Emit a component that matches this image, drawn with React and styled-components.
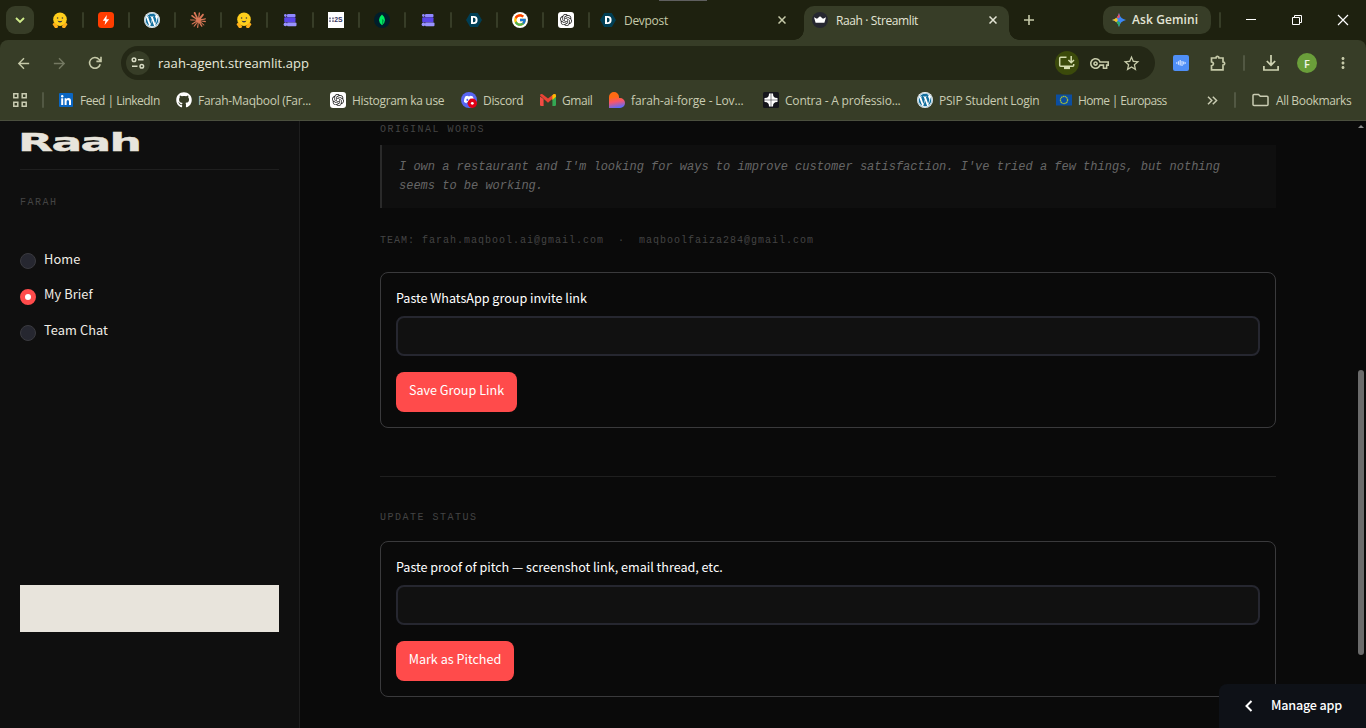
import React from "react";
import styled, { createGlobalStyle, css } from "styled-components";
import { FaWordpress, FaGithub } from "react-icons/fa";
import { FcGoogle } from "react-icons/fc";
import { SiOpenai, SiClaude, SiDiscord } from "react-icons/si";
import {
  MdArrowBack,
  MdArrowForward,
  MdStarBorder,
  MdMoreVert,
  MdOutlineVpnKey,
} from "react-icons/md";

const GlobalStyle = createGlobalStyle`
  * {
    box-sizing: border-box;
  }

  body {
    margin: 0;
    overflow: hidden;
    background: #0a0a0a;
  }
`;

const uiFont = `"Open Sans", "Noto Sans", sans-serif`;
const sansFont = `"Noto Sans CJK SC", "Noto Sans", sans-serif`;
const monoFont = `"Liberation Mono", monospace`;

const Window = styled.div`
  width: 1366px;
  height: 728px;
  display: flex;
  flex-direction: column;
  position: relative;
  overflow: hidden;
  font-family: ${uiFont};
`;

/* ---------- tab strip ---------- */

const TabStrip = styled.div`
  height: 40px;
  display: flex;
  align-items: center;
  padding-left: 6px;
  background: #1e210f;
`;

const DragHandle = styled.div`
  position: absolute;
  top: 0;
  left: 659px;
  width: 48px;
  height: 1px;
  background: #5f5f5f;
`;

const TabSearch = styled.div`
  width: 28px;
  height: 28px;
  margin-right: 10px;
  border-radius: 9px;
  background: #373d27;
  display: flex;
  align-items: center;
  justify-content: center;
`;

const PinnedTab = styled.div`
  width: 46px;
  height: 28px;
  padding-left: 8px;
  padding-right: 6px;
  display: flex;
  align-items: center;
  justify-content: space-between;
`;

const Divider = styled.div`
  width: 2px;
  height: 16px;
  flex: none;
  border-radius: 1px;
  background: ${(props) => props.$color || "#373d27"};
  margin-left: ${(props) => props.$left || 0}px;
`;

const Tab = styled.div`
  height: 34px;
  width: ${(props) => props.$width}px;
  align-self: flex-end;
  display: flex;
  align-items: center;
  padding: ${(props) => (props.$active ? "0 12px 6px 8px" : "0 18px 6px 4px")};
  font-size: 12px;
  letter-spacing: ${(props) => props.$spacing || 0}px;
  color: ${(props) => (props.$active ? "#e3e4d5" : "#c6caa9")};

  svg:last-child {
    margin-left: auto;
  }

  ${(props) =>
    props.$active &&
    css`
      position: relative;
      background: #373d27;
      border-radius: 10px 10px 0 0;

      &::before,
      &::after {
        content: "";
        position: absolute;
        bottom: 0;
        width: 10px;
        height: 10px;
      }
      &::before {
        left: -10px;
        background: radial-gradient(circle at 0 0, #1e210f 9.5px, #373d27 10px);
      }
      &::after {
        right: -10px;
        background: radial-gradient(circle at 100% 0, #1e210f 9.5px, #373d27 10px);
      }
    `}
`;

const TabTitle = styled.span`
  margin-left: 8px;
  white-space: pre;
`;

const NewTab = styled.div`
  width: 40px;
  display: flex;
  justify-content: center;
`;

const AskGemini = styled.div`
  width: 108px;
  height: 28px;
  margin-left: 54px;
  padding-left: 9px;
  padding-bottom: 1px;
  border-radius: 10px;
  background: #373d27;
  display: flex;
  align-items: center;
  gap: 6px;
  white-space: nowrap;
  font-size: 12px;
  font-weight: 600;
  letter-spacing: 0.1px;
  color: #e3e4d5;
`;

const WindowButtons = styled.div`
  display: flex;
  margin-left: 7px;

  svg {
    width: 46px;
    height: 12px;
  }
`;

/* ---------- toolbar ---------- */

const Toolbar = styled.div`
  background: #1e210f;
`;

const ToolbarInner = styled.div`
  height: 81px;
  border-radius: 8px 8px 0 0;
  border-bottom: 1px solid #4b4f3e;
  background: #373d27;
`;

const AddressRow = styled.div`
  height: 46px;
  display: flex;
  align-items: center;
  padding-left: 5px;
`;

const IconSlot = styled.div`
  width: ${(props) => props.$width || 36}px;
  flex: none;
  display: flex;
  align-items: center;
  justify-content: center;
  color: ${(props) => props.$color || "#c6caa9"};
`;

const AddressBar = styled.div`
  width: 1034px;
  height: 34px;
  flex: none;
  margin-left: 8px;
  padding: 0 12px 0 5px;
  border-radius: 17px;
  background: #242816;
  display: flex;
  align-items: center;
`;

const Circle = styled.div`
  width: ${(props) => props.$size}px;
  height: ${(props) => props.$size}px;
  flex: none;
  border-radius: 50%;
  background: ${(props) => props.$color};
  display: flex;
  align-items: center;
  justify-content: center;
  font-size: 11px;
  font-weight: 600;
  color: #f1f6e8;
`;

const Address = styled.span`
  flex: 1;
  margin-left: 8px;
  font-size: 13px;
  letter-spacing: 0.04px;
  color: #e7e8da;
`;

const ExtensionTile = styled.div`
  width: 16px;
  height: 16px;
  border-radius: 2px;
  background: #4f8ff7;
  display: flex;
  align-items: center;
  justify-content: center;
`;

const BookmarkRow = styled.div`
  height: 34px;
  padding: 0 0 6px 12px;
  display: flex;
  align-items: center;
`;

const BookmarkList = styled.div`
  display: flex;
  flex: none;
  margin-left: 15px;
  width: 1140px;
`;

const Bookmark = styled.div`
  width: ${(props) => props.$width}px;
  flex: none;
  display: flex;
  align-items: center;
  gap: 6px;
  margin-left: ${(props) => props.$left || 0}px;
  font-size: 12px;
  letter-spacing: ${(props) => props.$spacing || 0}px;
  white-space: nowrap;
  color: #c9ccb2;

  svg {
    flex: none;
  }
`;

/* ---------- page ---------- */

const Page = styled.div`
  flex: 1;
  display: flex;
  min-height: 0;
  background: #0a0a0a;
  font-family: ${sansFont};
`;

const Sidebar = styled.aside`
  width: 300px;
  padding: 0 20px;
  border-right: 1px solid #1e1e1e;
  background: #0f0f0f;
`;

const Brand = styled.div`
  height: 49px;
  padding-top: 4px;
  border-bottom: 1px solid #1f1f1f;
  font-family: "DejaVu Sans", sans-serif;
  font-size: 25px;
  font-weight: 700;
  line-height: 36px;
  letter-spacing: -0.9px;
  color: #e8e4dc;

  span {
    display: inline-block;
    margin-left: -2px;
    -webkit-text-stroke: 0.4px #e8e4dc;
    transform: scaleX(1.82);
    transform-origin: 0 50%;
  }
`;

const Caption = styled.div`
  height: 16px;
  font-family: ${monoFont};
  font-size: 10px;
  line-height: 18px;
  letter-spacing: ${(props) => props.$spacing || 1.5}px;
  white-space: pre;
  color: #444444;
`;

const UserName = styled(Caption)`
  margin-top: 24px;
`;

const Nav = styled.div`
  margin-top: 41px;
`;

const NavLabel = styled.span`
  font-size: 12.8px;
  line-height: 16px;
  letter-spacing: 0.08px;
  color: #f0ede6;
`;

const NavItem = styled.div`
  height: 36px;
  display: flex;
  align-items: flex-start;
  gap: 8px;

  & + & ${NavLabel} {
    margin-top: -1px;
  }
`;

const Radio = styled.div`
  width: 16px;
  height: 16px;
  margin-top: 2px;
  border-radius: 50%;
  border: 1px solid #3a3a3f;
  background: #262730;

  ${(props) =>
    props.$checked &&
    css`
      border: 5px solid #ff4b4b;
      background: #ffffff;
    `}
`;

const SidebarButton = styled.div`
  height: 47px;
  margin-top: 226px;
  background: #e8e4dc;
`;

const Main = styled.main`
  width: 976px;
  padding-left: 80px;
`;

const Quote = styled.blockquote`
  height: 63px;
  margin: 8px 0 0;
  padding: 13px 17px 11px;
  border-left: 2px solid #2a2a2a;
  background: #0f0f0f;
  font-family: ${monoFont};
  font-size: 12px;
  font-style: italic;
  line-height: 19px;
  color: #666666;
`;

const Team = styled(Caption)`
  margin-top: 24px;
`;

const FormCard = styled.section`
  height: 156px;
  margin-top: ${(props) => props.$top}px;
  padding: 15px;
  border: 1px solid #3a3a3c;
  border-radius: 8px;
`;

const FieldLabel = styled.div`
  height: 28px;
  font-size: 12.6px;
  line-height: 19px;
  letter-spacing: -0.02px;
  color: #ffffff;
`;

const Field = styled.div`
  height: 40px;
  border: 2px solid #262730;
  border-radius: 8px;
  background: #111111;
`;

const PrimaryButton = styled.div`
  width: ${(props) => props.$width}px;
  height: 40px;
  margin-top: 16px;
  padding-bottom: 5px;
  border-radius: 8px;
  background: #ff4b4b;
  display: flex;
  align-items: center;
  justify-content: center;
  font-size: 12.6px;
  line-height: 18px;
  white-space: nowrap;
  color: #ffffff;
`;

const Rule = styled.div`
  height: 1px;
  margin: 48px 0 32px;
  background: #1f1f1f;
`;

const ScrollArrow = styled.div`
  position: absolute;
  top: 125px;
  left: 1358px;
  border: 3px solid transparent;
  border-top: none;
  border-bottom: 3px solid #8a8a8a;
`;

const ScrollThumb = styled.div`
  position: absolute;
  top: 370px;
  left: 1358px;
  width: 6px;
  height: 285px;
  border-radius: 3px;
  background: #6b6b6b;
`;

const ManageApp = styled.div`
  position: absolute;
  right: 0;
  bottom: 0;
  width: 147px;
  height: 44px;
  padding-left: 25px;
  border-radius: 8px 0 0 0;
  background: #0e1117;
  display: flex;
  align-items: center;
  gap: 17px;
  font-family: ${sansFont};
  font-size: 12.6px;
  font-weight: 500;
  letter-spacing: -0.2px;
  color: #ffffff;

  span {
    padding-bottom: 3px;
  }
`;

/* ---------- drawings ---------- */

const Hugging = () => (
  <svg width="16" height="16" viewBox="0 0 16 16">
    <circle cx="8" cy="7.3" r="6.8" fill="#ffce1c" />
    <path d="M.5 12.2 2 10.6l2.6 1.6 1.6 2.6-1 1.1H3zM15.5 12.2 14 10.6l-2.6 1.6-1.6 2.6 1 1.1H13z" fill="#ffae1a" />
    <circle cx="5.6" cy="6" r=".8" fill="#3a3b45" />
    <circle cx="10.4" cy="6" r=".8" fill="#3a3b45" />
    <path d="M5.6 8.4q2.4 1.2 4.8 0-.4 2-2.4 2t-2.4-2" fill="#3a3b45" />
  </svg>
);

const Bolt = () => (
  <svg width="16" height="16" viewBox="0 0 16 16">
    <rect width="16" height="16" rx="3.5" fill="#ff3d00" />
    <path d="M8.8 3 4.8 8.8h2.6L6.6 13l4.6-5.8H8.4z" fill="#fff" />
  </svg>
);

const Wordpress = () => (
  <svg width="16" height="16" viewBox="0 0 16 16">
    <circle cx="8" cy="8" r="8" fill="#fff" />
    <FaWordpress x="0.4" y="0.4" size={15.2} color="#136f9e" />
  </svg>
);

const Forms = () => (
  <svg width="16" height="16" viewBox="0 0 16 16">
    <rect x="5" y="2" width="8.5" height="3.2" rx="1" fill="#8f88ff" />
    <rect x="2.2" y="5.2" width="11.3" height="5.4" rx="1" fill="#5a45e8" />
    <rect x="5" y="10.4" width="9.5" height="3.8" rx="1" fill="#9a93ff" />
    <circle cx="3.4" cy="3.5" r="1.4" fill="#8f88ff" />
    <circle cx="3.4" cy="12.4" r="1.8" fill="#9a93ff" />
  </svg>
);

const H2S = () => (
  <svg width="16" height="16" viewBox="0 0 16 16">
    <rect width="16" height="16" fill="#fff" />
    <path d="M2 5.5v5M5 5.5v5" stroke="#33345f" strokeWidth="1.2" strokeDasharray="1.8 1" />
    <text x="6.3" y="10.4" fontFamily="Liberation Sans" fontSize="6.8" fontWeight="700" fill="#33345f">
      2S
    </text>
  </svg>
);

const Mongo = () => (
  <svg width="16" height="16" viewBox="0 0 16 16">
    <circle cx="8" cy="8" r="8" fill="#001e2b" />
    <path d="M8 2.5Q11 5 11 8t-3 5.3Q5 11 5 8t3-5.5" fill="#00ed64" />
    <path d="M8 7v6.3Q9.6 11 9.8 8Z" fill="#00a04a" />
  </svg>
);

const Devpost = () => (
  <svg width="16" height="16" viewBox="0 0 16 16">
    <path d="M4.2 1h7.6L16 8l-4.2 7H4.2L0 8z" fill="#003e54" />
    <path d="M5 4h2.8q3.8 0 3.8 4T7.8 12H5zm2 1.7v4.6h.8Q9.6 10.3 9.6 8T7.8 5.7z" fill="#fff" fillRule="evenodd" />
  </svg>
);

const Google = () => (
  <svg width="16" height="16" viewBox="0 0 16 16">
    <circle cx="8" cy="8" r="8" fill="#fff" />
    <FcGoogle x="1" y="1" size={14} />
  </svg>
);

const ChatGpt = () => (
  <svg width="16" height="16" viewBox="0 0 16 16">
    <rect width="16" height="16" rx="3" fill="#fff" />
    <SiOpenai x="2" y="2" size={12} color="#222" />
  </svg>
);

const Crown = () => (
  <svg width="16" height="16" viewBox="0 0 16 16">
    <circle cx="8" cy="8" r="8" fill="#262730" />
    <path d="m2 5.2 3 1.6 3-2.6 3 2.6 3-1.6-1.6 5.6H3.600z" fill="#fff" />
  </svg>
);

const Cross = ({ color }) => (
  <svg width="8" height="8" viewBox="0 0 8 8" stroke={color} strokeWidth="1.5">
    <path d="m.5.5 7 7m0-7-7 7" />
  </svg>
);

const Plus = () => (
  <svg width="10" height="10" viewBox="0 0 10 10" stroke="#c6caa9" strokeWidth="1.6">
    <path d="M5 0v10M0 5h10" />
  </svg>
);

const Chevron = () => (
  <svg width="10" height="7" viewBox="0 0 10 7" fill="none" stroke="#cfeb8a" strokeWidth="1.9">
    <path d="m1 1 4 4 4-4" />
  </svg>
);

const Gemini = () => (
  <svg width="14" height="14" viewBox="0 0 14 14">
    <path d="M7 0q1.2 5.800 7 7-5.800 1.200-7 7-1.200-5.800-7-7 5.800-1.200 7-7" fill="#3b86f7" />
    <path d="M7 0Q6.600 2.500 5 4l1 1.500L8 4Q7.300 2 7 0" fill="#ee4d5d" />
    <path d="M0 7q2.500-.6 4.300-2.300L6 7 4.300 9.300Q2.500 7.600 0 7" fill="#f6c21c" />
    <path d="M7 14q-.6-2.500-2.500-4.500L6 8l2.500 2Q7.300 12 7 14" fill="#2fae60" />
  </svg>
);

const Reload = () => (
  <svg width="14" height="14" viewBox="0 0 14 14" fill="none" stroke="#c6caa9" strokeWidth="1.6">
    <path d="M12.2 8.2A5.4 5.4 0 1 1 11 3.3L12.8 5M13 .8v4.6H8.4" />
  </svg>
);

const Tune = () => (
  <svg width="14" height="12" viewBox="0 0 14 12" fill="none" stroke="#d9dcc5" strokeWidth="1.5">
    <circle cx="3" cy="2.8" r="1.8" />
    <path d="M7 2.8h5.5M1 9.2h5.5" />
    <circle cx="10.8" cy="9.2" r="1.8" />
  </svg>
);

const Install = () => (
  <svg width="18" height="16" viewBox="0 0 18 16" fill="none" stroke="#d4dcae" strokeWidth="1.5">
    <path d="M8.5 2.2H2.7q-1 0-1 1v7q0 1 1 1h12q1 0 1-1V9M13.2 1v6.500M10.400 5l2.800 2.800L16 5" />
    <path d="M6 13h6" strokeWidth="2.2" />
  </svg>
);

const Puzzle = () => (
  <svg width="18" height="18" viewBox="0 0 18 18" fill="none" stroke="#c6caa9" strokeWidth="1.7">
    <path d="M2.5 4H7q0-1.700 1.500-1.700T10 4h4v4q1.700 0 1.700 1.500T14 11v4.800H2.500v-4q2-.4 2-2t-2-2z" />
  </svg>
);

const Wave = () => (
  <svg width="10" height="8" viewBox="0 0 10 8" stroke="#cfe0ff" strokeWidth="1.2">
    <path d="M.7 3.2v1.600M2.500 2.200v3.600M4.200 1v5.500M6 2v5M7.700 2.500v3M9.300 3.200v1.600" />
  </svg>
);

const Download = () => (
  <svg width="16" height="16" viewBox="0 0 16 16" fill="none" stroke="#d0d4b3" strokeWidth="1.7">
    <path d="M8 0v10M3.8 6 8 10.2 12.2 6M.9 11v4h14.2v-4" />
  </svg>
);

const AppsGrid = () => (
  <svg width="16" height="16" viewBox="0 0 16 16" fill="none" stroke="#c9ccb2" strokeWidth="1.5">
    <path d="M1.8 1.8h4v4h-4zM10.2 1.8h4v4h-4zM1.8 10.2h4v4h-4zM10.2 10.2h4v4h-4z" />
  </svg>
);

const Linkedin = () => (
  <svg width="15" height="16" viewBox="0 0 15 16">
    <rect y="1" width="14" height="14" rx="1" fill="#0a66c2" />
    <circle cx="3.2" cy="4.2" r="1.2" fill="#fff" />
    <path d="M2.2 6.300h2V13h-2zM5.600 6.300h1.900v.9q.6-1.100 2-1.100 2.500 0 2.500 2.900v4h-2V9.500q0-1.600-1.100-1.600-1.300 0-1.300 1.700V13h-2z" fill="#fff" />
  </svg>
);

const Discord = () => (
  <svg width="16" height="16" viewBox="0 0 16 16">
    <circle cx="8" cy="8" r="8" fill="#5865f2" />
    <SiDiscord x="3" y="2.5" size={10} color="#fff" />
    <circle cx="11.3" cy="11.3" r="4.7" fill="#e00016" />
    <circle cx="11.3" cy="11.3" r="1.4" fill="#fff" />
  </svg>
);

const Gmail = () => (
  <svg width="16" height="16" viewBox="0 0 16 16">
    <path d="M0 4.500 3.600 7v7H1.200Q0 14 0 12.800z" fill="#f24b43" />
    <path d="M16 4.500 12.400 7v7h2.400q1.200 0 1.200-1.200z" fill="#34a853" />
    <path d="M0 3.500Q.3 1.500 2.500 2.200L8 6.400l5.500-4.200Q15.700 1.500 16 3.500L8 10.800z" fill="#ea4335" />
    <path d="m12.400 3.200 1.100-1Q15.700 1.500 16 3.500v1.300L12.400 8z" fill="#fbbc04" />
  </svg>
);

const Lovable = () => (
  <svg width="16" height="16" viewBox="0 0 16 16">
    <defs>
      <linearGradient id="lovable" x1=".3" y1="0" x2=".5" y2="1">
        <stop offset=".3" stopColor="#ff6a13" />
        <stop offset=".6" stopColor="#f8556c" />
        <stop offset="1" stopColor="#5b6bff" />
      </linearGradient>
    </defs>
    <path d="M0 16V5a5 5 0 0 1 10 0v1h1a5 5 0 0 1 0 10z" fill="url(#lovable)" />
  </svg>
);

const Contra = () => (
  <svg width="16" height="16" viewBox="0 0 16 16">
    <rect width="16" height="16" rx="1.5" fill="#15161c" />
    <path d="M6 1.500h4Q9.800 6.200 14.500 6v4Q9.800 9.800 10 14.500H6Q6.200 9.800 1.500 10V6Q6.200 6.200 6 1.500" fill="#fff" />
    <path d="M8 1.500v13M1.500 8h13" stroke="#15161c" strokeWidth=".5" />
  </svg>
);

const Europe = () => (
  <svg width="16" height="16" viewBox="0 0 16 16">
    <rect y="2.5" width="16" height="11" fill="#0b4ea2" />
    <circle cx="8" cy="8" r="3.6" fill="none" stroke="#a2bd39" strokeWidth="1.3" strokeDasharray="1.5 .4" />
  </svg>
);

const Folder = () => (
  <svg width="18" height="14" viewBox="0 0 18 14" fill="none" stroke="#c9ccb2" strokeWidth="1.5">
    <path d="M1 2.500q0-1 1-1h4.500l1.800 1.800h6.700q1 0 1 1v7.200q0 1-1 1H2q-1 0-1-1z" />
  </svg>
);

const Overflow = () => (
  <svg width="11" height="9" viewBox="0 0 11 9" fill="none" stroke="#c9ccb2" strokeWidth="1.5">
    <path d="m1 .7 3.800 3.800L1 8.300M5.800.7l3.800 3.800-3.800 3.800" />
  </svg>
);

const pinned = [
  <Hugging />,
  <Bolt />,
  <Wordpress />,
  <SiClaude size={16} color="#d97757" />,
  <Hugging />,
  <Forms />,
  <H2S />,
  <Mongo />,
  <Forms />,
  <Devpost />,
  <Google />,
  <ChatGpt />,
];

const bookmarks = [
  { icon: <Linkedin />, label: "Feed | LinkedIn", width: 117, spacing: -0.52 },
  { icon: <FaGithub size={16} color="#fff" />, label: "Farah-Maqbool (Far...", width: 154, spacing: -0.3 },
  { icon: <ChatGpt />, label: "Histogram ka use", width: 131, spacing: -0.32 },
  { icon: <Discord />, label: "Discord", width: 79, spacing: -0.33 },
  { icon: <Gmail />, label: "Gmail", width: 69, spacing: -0.45 },
  { icon: <Lovable />, label: "farah-ai-forge - Lov...", width: 154, spacing: -0.13 },
  { icon: <Contra />, label: "Contra - A professio...", width: 154, spacing: -0.2 },
  { icon: <Wordpress />, label: "PSIP Student Login", width: 139, spacing: -0.25 },
  { icon: <Europe />, label: "Home | Europass", width: 113, spacing: -0.65 },
];

export default function App() {
  return (
    <Window>
      <GlobalStyle />
      <TabStrip>
        <TabSearch>
          <Chevron />
        </TabSearch>
        {pinned.map((icon, index) => (
          <PinnedTab key={index}>
            {icon}
            <Divider />
          </PinnedTab>
        ))}
        <Tab $width={208} $spacing={-0.3}>
          <Devpost />
          <TabTitle>Devpost</TabTitle>
          <Cross color="#c6caa9" />
        </Tab>
        <Tab $active $width={205} $spacing={-0.38}>
          <Crown />
          <TabTitle>Raah · Streamlit</TabTitle>
          <Cross color="#e3e4d5" />
        </Tab>
        <NewTab>
          <Plus />
        </NewTab>
        <AskGemini>
          <Gemini />
          Ask Gemini
        </AskGemini>
        <Divider $left={8} />
        <WindowButtons>
          <svg viewBox="0 0 46 12">
            <path d="M18 5.5h10" stroke="#fff" />
          </svg>
          <svg viewBox="0 0 46 12" fill="none" stroke="#fff">
            <path d="M18.5 3.500h7v7h-7zM20.500 3.500v-2h7v7h-2" />
          </svg>
          <svg viewBox="0 0 46 12" stroke="#fff" strokeWidth="1.2">
            <path d="m18 1 10 10m0-10L18 11" />
          </svg>
        </WindowButtons>
      </TabStrip>
      <DragHandle />

      <Toolbar>
        <ToolbarInner>
          <AddressRow>
            <IconSlot>
              <MdArrowBack size={17} />
            </IconSlot>
            <IconSlot $color="#747962">
              <MdArrowForward size={17} />
            </IconSlot>
            <IconSlot>
              <Reload />
            </IconSlot>
            <AddressBar>
              <Circle $size={24} $color="#373d27">
                <Tune />
              </Circle>
              <Address>raah-agent.streamlit.app</Address>
              <Circle $size={24} $color="#3b4a0b">
                <Install />
              </Circle>
              <IconSlot $width={40}>
                <MdOutlineVpnKey size={19} />
              </IconSlot>
              <IconSlot $width={24}>
                <MdStarBorder size={19} />
              </IconSlot>
            </AddressBar>
            <IconSlot $width={52}>
              <ExtensionTile>
                <Wave />
              </ExtensionTile>
            </IconSlot>
            <IconSlot $width={22}>
              <Puzzle />
            </IconSlot>
            <Divider $color="#525843" $left={14} />
            <IconSlot $width={52}>
              <Download />
            </IconSlot>
            <IconSlot $width={20}>
              <Circle $size={20} $color="#6a9e3a">
                F
              </Circle>
            </IconSlot>
            <IconSlot $width={52}>
              <MdMoreVert size={18} />
            </IconSlot>
          </AddressRow>
          <BookmarkRow>
            <AppsGrid />
            <Divider $color="#525843" $left={14} />
            <BookmarkList>
              {bookmarks.map(({ icon, label, width, spacing }) => (
                <Bookmark key={label} $width={width} $spacing={spacing}>
                  {icon}
                  {label}
                </Bookmark>
              ))}
              <IconSlot $width={86}>
                <Overflow />
              </IconSlot>
            </BookmarkList>
            <Divider $color="#525843" $left={35} />
            <Bookmark $width={110} $spacing={-0.35} $left={16}>
              <Folder />
              All Bookmarks
            </Bookmark>
          </BookmarkRow>
        </ToolbarInner>
      </Toolbar>

      <Page>
        <Sidebar>
          <Brand>
            <span>Raah</span>
          </Brand>
          <UserName>FARAH</UserName>
          <Nav>
            <NavItem>
              <Radio />
              <NavLabel>Home</NavLabel>
            </NavItem>
            <NavItem>
              <Radio $checked />
              <NavLabel>My Brief</NavLabel>
            </NavItem>
            <NavItem>
              <Radio />
              <NavLabel>Team Chat</NavLabel>
            </NavItem>
          </Nav>
          <SidebarButton />
        </Sidebar>
        <Main>
          <Caption>ORIGINAL WORDS</Caption>
          <Quote>
            I own a restaurant and I'm looking for ways to improve customer
            satisfaction. I've tried a few things, but nothing seems to be
            working.
          </Quote>
          <Team $spacing={1}>
            {"TEAM: farah.maqbool.ai@gmail.com  ·  maqboolfaiza284@gmail.com"}
          </Team>
          <FormCard $top={24}>
            <FieldLabel>Paste WhatsApp group invite link</FieldLabel>
            <Field />
            <PrimaryButton $width={121}>Save Group Link</PrimaryButton>
          </FormCard>
          <Rule />
          <Caption>UPDATE STATUS</Caption>
          <FormCard $top={16}>
            <FieldLabel>
              Paste proof of pitch — screenshot link, email thread, etc.
            </FieldLabel>
            <Field />
            <PrimaryButton $width={118}>Mark as Pitched</PrimaryButton>
          </FormCard>
        </Main>
      </Page>
      <ScrollArrow />
      <ScrollThumb />
      <ManageApp>
        <svg width="10" height="12" viewBox="0 0 10 12" fill="none" stroke="#fff" strokeWidth="2">
          <path d="M7.5 1 2.500 6l5 5" />
        </svg>
        <span>Manage app</span>
      </ManageApp>
    </Window>
  );
}
